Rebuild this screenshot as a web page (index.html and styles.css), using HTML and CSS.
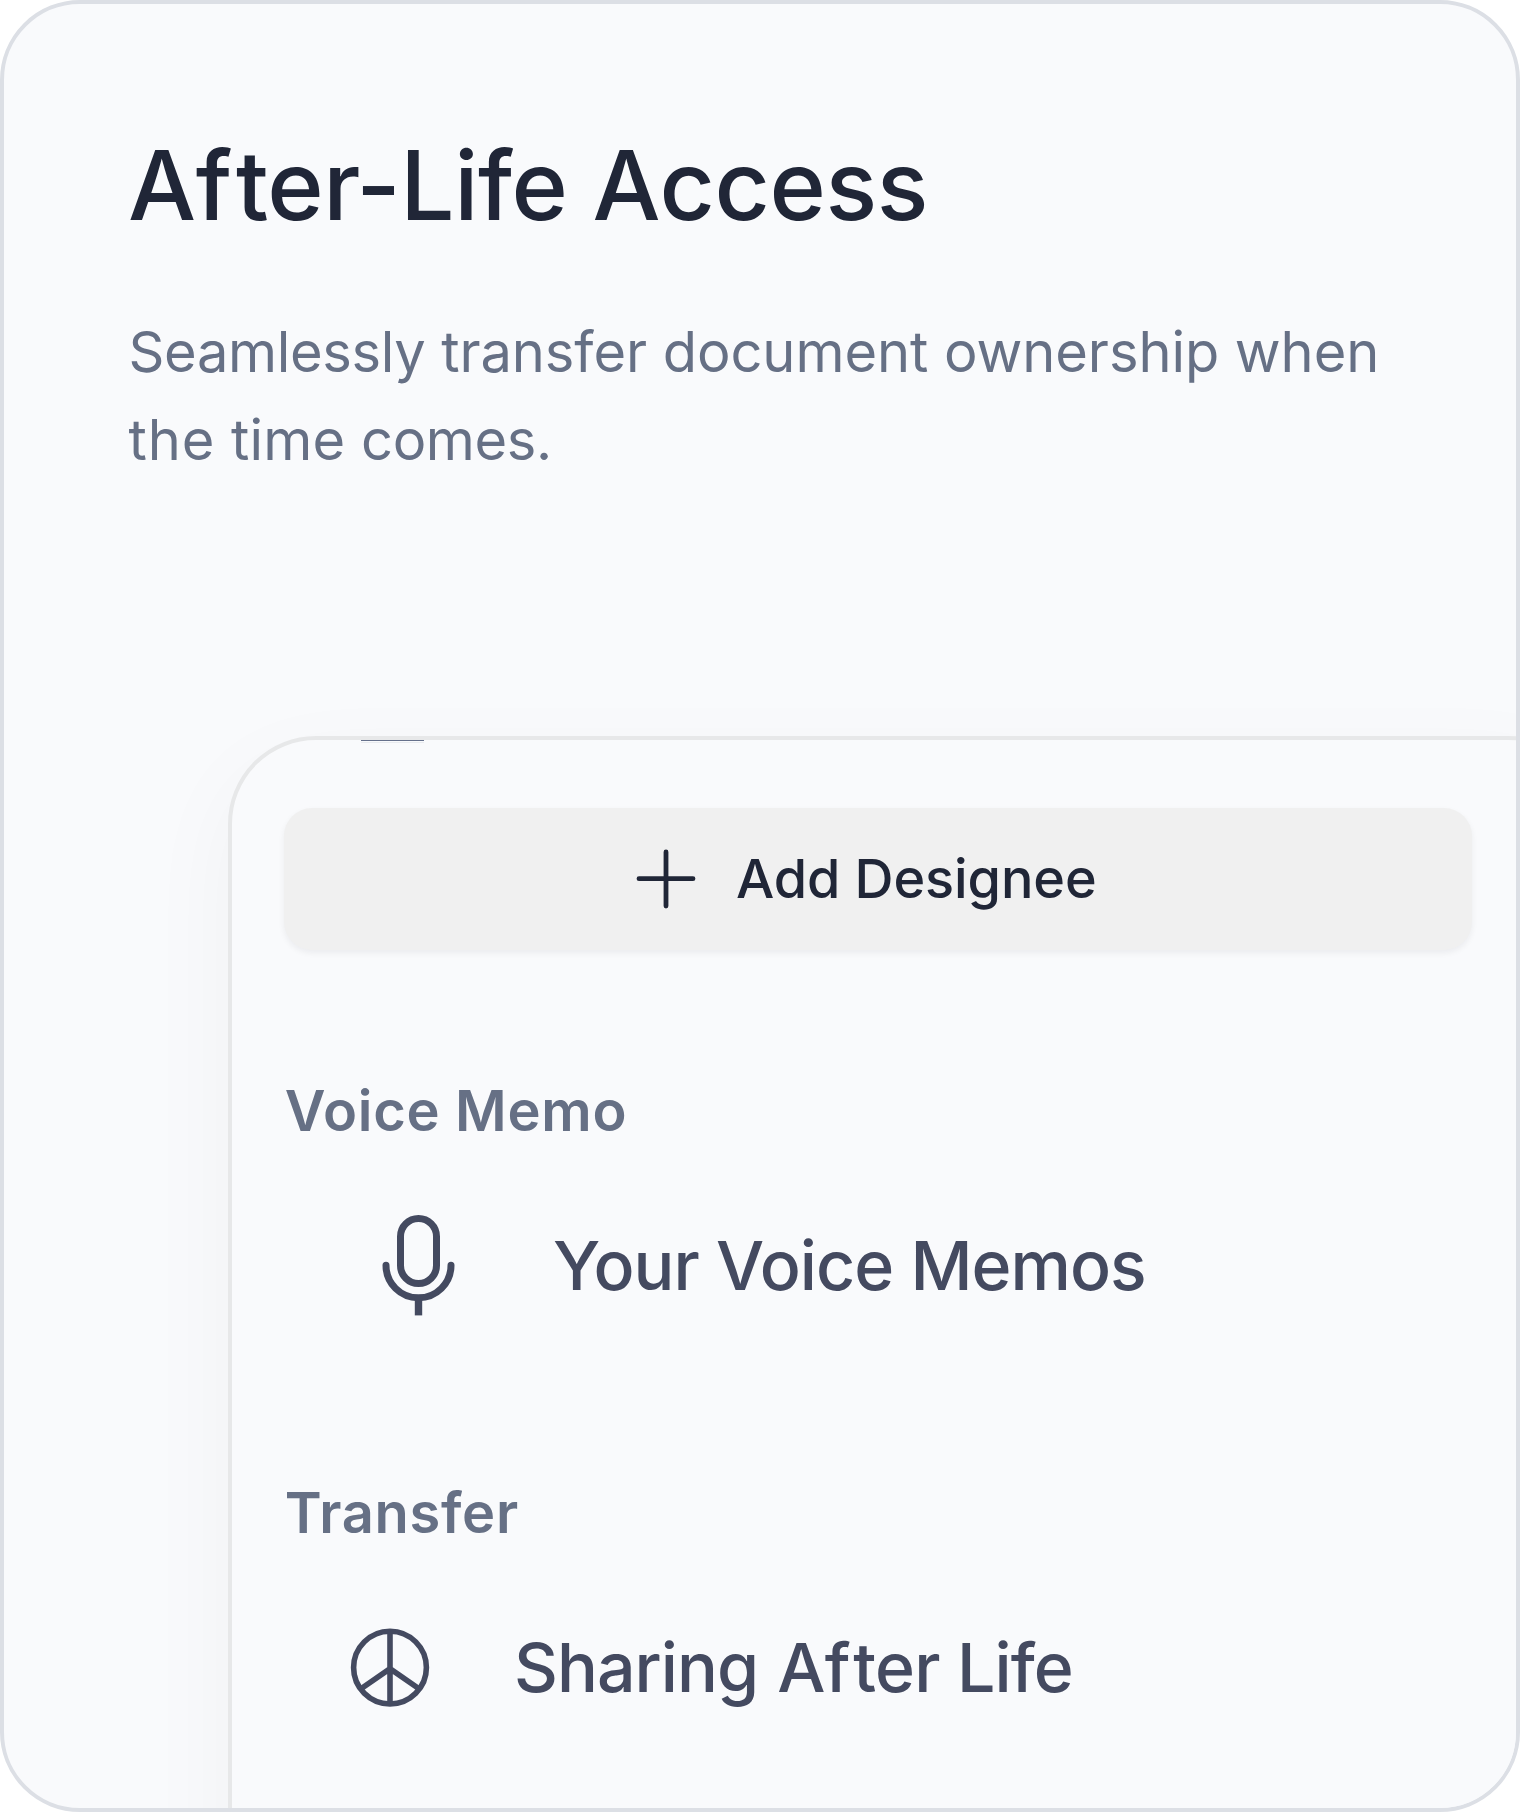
FILE: index.html
```html
<!DOCTYPE html>
<html lang="en">
<head>
<meta charset="utf-8">
<title>After-Life Access</title>
<link rel="stylesheet" href="styles.css">
</head>
<body>
<article class="card">
  <header class="intro">
    <h1 class="title">A<span class="loose-f">f</span>ter-Life Access</h1>
    <p class="lead"><span class="tight">Seamlessly</span> transfer document ownership when <span class="wide">the</span> <span class="open">time</span> <span class="snug">comes.</span></p>
  </header>
  <section class="panel">
    <span class="tab-mark"></span>
    <button class="add" type="button">
      <svg class="plus" width="60" height="60" viewBox="0 0 60 60" fill="none" stroke="currentColor" stroke-width="4.8" stroke-linecap="round"><path d="M30 3V57M3 29.7H57"/></svg>
      <span class="add-text">Add Designee</span>
    </button>
    <h2 class="label">Voice Memo</h2>
    <div class="row row-memo">
      <svg width="74" height="104" viewBox="0 0 74 104" fill="none" stroke="currentColor" stroke-width="7" stroke-linecap="round"><rect x="18.5" y="5.5" width="36" height="65" rx="18"/><path d="M4 52.2C4 70.5 18.6 84.8 36.5 84.8S69 70.5 69 52.2"/><path d="M36.5 85V102.4" stroke-width="7.4" stroke-linecap="butt"/></svg>
      <span class="row-text">Your Voice Memos</span>
    </div>
    <h2 class="label label-transfer">Transfer</h2>
    <div class="row row-share">
      <svg width="80" height="80" viewBox="0 0 80 80" fill="none" stroke="currentColor" stroke-width="5.6"><circle cx="40" cy="40.6" r="36.4"/><path d="M40 5V77M11 61.8L40 41.6L69 61.8"/></svg>
      <span class="row-text">Sharing <span class="after">A<span class="loose-f">f</span>ter</span> Life</span>
    </div>
  </section>
</article>
</body>
</html>
```
FILE: styles.css
```css
* { box-sizing: border-box; }
body {
  margin: 0;
  background: #fff;
  font-family: Inter, "Liberation Sans", sans-serif;
}
.card {
  width: 1520px;
  height: 1812px;
  border: 4px solid #dcdfe5;
  border-radius: 80px;
  background: #f9fafc;
  overflow: hidden;
}
.intro { padding: 124px 120px 0 124px; }
.title {
  margin: 0;
  font-size: 96px;
  line-height: 114px;
  font-weight: 500;
  letter-spacing: -0.4px;
  color: #202637;
}
.loose-f { letter-spacing: 0.04em; }
.lead {
  margin: 66px 0 0 0.5px;
  font-size: 56px;
  line-height: 88px;
  letter-spacing: -0.06px;
  color: #667085;
}
.tight { letter-spacing: -0.33px; }
.wide { letter-spacing: 0.9px; }
.open { letter-spacing: 0.2px; }
.snug { letter-spacing: -0.4px; }
.panel {
  position: relative;
  width: 1368px;
  height: 1300px;
  margin: 252px 0 0 224px;
  padding: 68px 52px;
  border: 4px solid #e7e8e9;
  border-radius: 88px;
  background: #f9fafc;
  box-shadow: 0 32px 96px rgba(0, 0, 0, .04);
}
.tab-mark {
  position: absolute;
  left: 129px;
  top: 0;
  width: 63px;
  height: 1px;
  background: #66718c;
  box-shadow: 0 2px 0 0 #e9ebef;
}
.add {
  display: flex;
  align-items: center;
  width: 1188px;
  height: 142px;
  padding: 0 0 0 352px;
  gap: 40px;
  border: 0;
  border-radius: 28px;
  background: #f0f0f0;
  box-shadow: 0 3px 6px rgba(16, 24, 40, .06);
  color: #202637;
  font: 500 54px/66px Inter, sans-serif;
  letter-spacing: -0.1px;
}
.label {
  margin: 127px 0 0 0.8px;
  font-size: 56px;
  line-height: 68px;
  font-weight: 600;
  letter-spacing: 0.7px;
  color: #667085;
}
.row {
  display: flex;
  align-items: center;
  height: 104px;
  color: #444a60;
  font-size: 68px;
  line-height: 82px;
  font-weight: 500;
  letter-spacing: -0.95px;
}
.row-memo { margin-top: 68px; padding-left: 98px; gap: 97px; }
.label-transfer { margin-top: 162px; }
.row-share { margin-top: 68px; padding-left: 66px; gap: 84px; }
.after { margin-left: 2px; letter-spacing: -0.75px; }
```
